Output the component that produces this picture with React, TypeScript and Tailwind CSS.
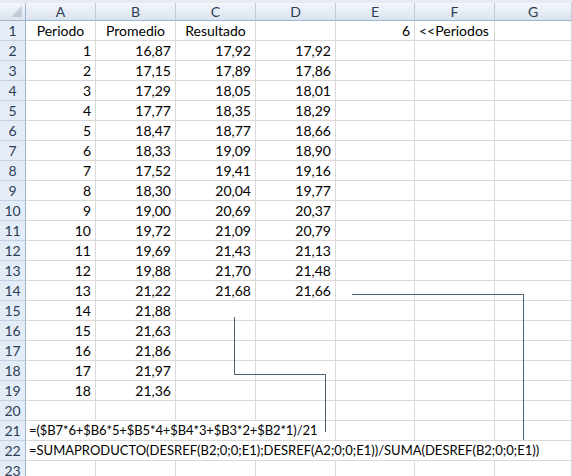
import React from 'react';

const cols = ['A', 'B', 'C', 'D', 'E', 'F', 'G'];

// Periodo, Promedio, Resultado, D
const data: [number, string, string, string][] = [
  [1, '16,87', '17,92', '17,92'],
  [2, '17,15', '17,89', '17,86'],
  [3, '17,29', '18,05', '18,01'],
  [4, '17,77', '18,35', '18,29'],
  [5, '18,47', '18,77', '18,66'],
  [6, '18,33', '19,09', '18,90'],
  [7, '17,52', '19,41', '19,16'],
  [8, '18,30', '20,04', '19,77'],
  [9, '19,00', '20,69', '20,37'],
  [10, '19,72', '21,09', '20,79'],
  [11, '19,69', '21,43', '21,13'],
  [12, '19,88', '21,70', '21,48'],
  [13, '21,22', '21,68', '21,66'],
  [14, '21,88', '', ''],
  [15, '21,63', '', ''],
  [16, '21,86', '', ''],
  [17, '21,97', '', ''],
  [18, '21,36', '', ''],
];

const cell = 'h-[20px] border-r border-b border-[#d9d9d9] px-[4px] leading-[19px] whitespace-nowrap';
const formula = 'h-[20px] border-r border-b border-[#d9d9d9] pl-[3px] leading-[19px] whitespace-nowrap text-[13px]';
const rowHead =
  'h-[20px] border-r border-b border-r-[#9eb6ce] border-b-[#c5d1df] bg-[#e4ecf7] text-center leading-[19px] text-[#2c3d55]';

function RowNum({ n }: { n: number }) {
  return <div className={rowHead}>{n}</div>;
}

export default function App() {
  return (
    <div className="relative w-[572px] h-[476px] overflow-hidden bg-white text-[14px] text-black font-['Lato','Liberation_Sans',sans-serif]">
      <div className="h-[3px] bg-[#e6ebf2]" />
      <div className="grid grid-cols-[26px_70px_80px_80px_80px_79px_80px_1fr]">
        {/* cabecera de columnas */}
        <div className="relative h-[18px] border-r border-b border-[#9eb6ce] bg-gradient-to-b from-[#f3f6fa] to-[#dbe3ee]">
          <div className="absolute right-[3px] bottom-[3px] w-0 h-0 border-l-[11px] border-l-transparent border-b-[11px] border-b-[#c3cbd6]" />
        </div>
        {cols.map((c) => (
          <div
            key={c}
            className="h-[18px] border-r border-b border-r-[#c0cad8] border-b-[#9eb6ce] bg-gradient-to-b from-[#f3f6fa] to-[#dbe3ee] text-center leading-[17px] text-[#2c3d55]"
          >
            {c}
          </div>
        ))}

        {/* fila 1 */}
        <RowNum n={1} />
        <div className={`${cell} text-center`}>Periodo</div>
        <div className={`${cell} text-center`}>Promedio</div>
        <div className={`${cell} text-center`}>Resultado</div>
        <div className={cell} />
        <div className={`${cell} text-right`}>6</div>
        <div className={cell}>&lt;&lt;Periodos</div>
        <div className={cell} />

        {data.map(([p, b, c, d], i) => (
          <React.Fragment key={p}>
            <RowNum n={i + 2} />
            <div className={`${cell} text-right`}>{p}</div>
            <div className={`${cell} text-right`}>{b}</div>
            <div className={`${cell} text-right`}>{c}</div>
            <div className={`${cell} text-right`}>{d}</div>
            <div className={cell} />
            <div className={cell} />
            <div className={cell} />
          </React.Fragment>
        ))}

        {/* fila 20 */}
        <RowNum n={20} />
        {cols.map((c) => (
          <div key={c} className={cell} />
        ))}

        {/* fila 21: la fórmula se desborda hasta D */}
        <RowNum n={21} />
        <div className={`${formula} col-span-4 tracking-[-0.1px]`}>=($B7*6+$B6*5+$B5*4+$B4*3+$B3*2+$B2*1)/21</div>
        <div className={cell} />
        <div className={cell} />
        <div className={cell} />

        {/* fila 22 */}
        <RowNum n={22} />
        <div className={`${formula} col-span-7`}>
          =SUMAPRODUCTO(DESREF(B2;0;0;E1);DESREF(A2;0;0;E1))/SUMA(DESREF(B2;0;0;E1))
        </div>

        {/* fila 23 */}
        <RowNum n={23} />
        {cols.map((c) => (
          <div key={c} className={cell} />
        ))}
      </div>

      {/* conectores dibujados encima de la hoja */}
      <svg className="absolute left-0 top-0 pointer-events-none" width="572" height="476">
        <path d="M234.5 317 V374.5 H325.5 V432" fill="none" stroke="#4d6070" strokeWidth="1" />
        <path d="M352 294.5 H523.5 V440" fill="none" stroke="#4d6070" strokeWidth="1" />
      </svg>
    </div>
  );
}
